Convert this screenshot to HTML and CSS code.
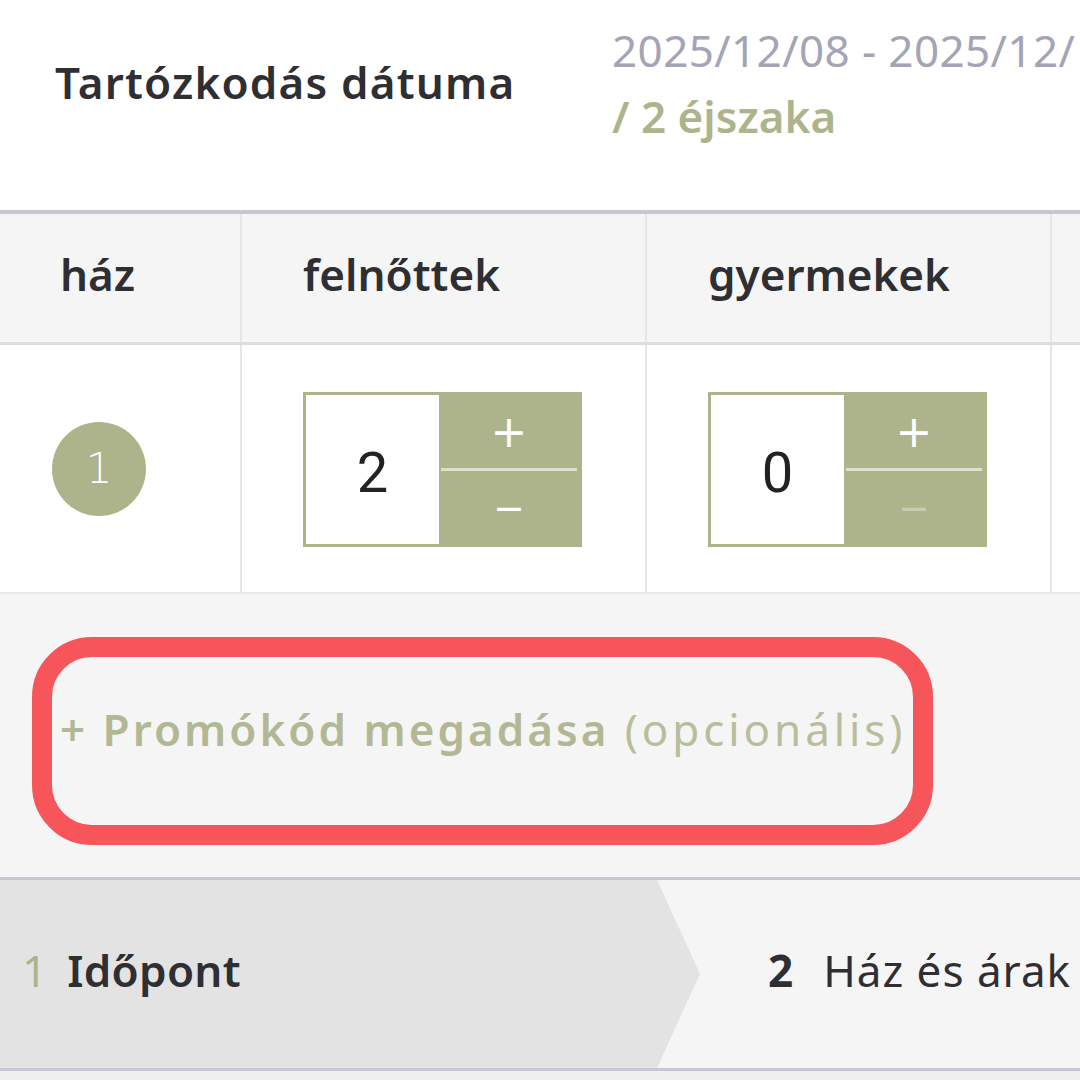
FILE: index.html
```html
<!DOCTYPE html>
<html lang="hu">
<head>
    <meta charset="UTF-8">
    <meta name="viewport" content="width=device-width, initial-scale=1.0">
    <title>Foglalás</title>
    <link rel="stylesheet" href="styles.css">
</head>
<body>

<div class="booking">
    <!-- Tartózkodás dátuma -->
    <div class="stay">
        <div class="stay-label">Tartózkodás dátuma</div>
        <div class="stay-value">
            <div class="stay-dates">2025/12/08 - 2025/12/</div>
            <div class="stay-nights">/ 2 éjszaka</div>
        </div>
    </div>

    <!-- Házak táblázat -->
    <div class="rooms">
        <div class="rooms-head">
            <div class="cell cell-first">ház</div>
            <div class="cell">felnőttek</div>
            <div class="cell">gyermekek</div>
            <div class="cell"></div>
        </div>
        <div class="rooms-row">
            <div class="cell cell-first">
                <span class="house-no">1</span>
            </div>
            <div class="cell">
                <div class="stepper">
                    <div class="stepper-value">2</div>
                    <div class="stepper-buttons">
                        <button class="stepper-btn">+</button>
                        <button class="stepper-btn">&minus;</button>
                    </div>
                </div>
            </div>
            <div class="cell">
                <div class="stepper">
                    <div class="stepper-value">0</div>
                    <div class="stepper-buttons">
                        <button class="stepper-btn">+</button>
                        <button class="stepper-btn disabled">&minus;</button>
                    </div>
                </div>
            </div>
            <div class="cell"></div>
        </div>
    </div>

    <!-- Promókód -->
    <div class="promo">
        <div class="promo-mark">
            <a class="promo-link"><strong>+ Promókód megadása</strong> (opcionális)</a>
        </div>
    </div>

    <!-- Lépések -->
    <div class="steps">
        <div class="step step-active">
            <span class="step-no">1</span>
            <span class="step-name">Időpont</span>
        </div>
        <div class="step">
            <span class="step-no">2</span>
            <span class="step-name">Ház és árak</span>
        </div>
    </div>
    <div class="steps-after"></div>
</div>

</body>
</html>
```

FILE: styles.css
```css
html, body {
    margin: 0;
    padding: 0;
    background: #ffffff;
    overflow: hidden;
}

body {
    width: 1080px;
    height: 1080px;
    font-family: "Noto Sans", "Open Sans", sans-serif;
    font-size: 44px;
    color: #2e2e33;
}

.booking {
    width: 1500px;
}

/* --- Tartózkodás dátuma --- */
.stay {
    display: flex;
    align-items: flex-start;
    height: 210px;
    padding-left: 55px;
}

.stay-label {
    width: 557px;
    padding-top: 52px;
    font-weight: 600;
    letter-spacing: 1.2px;
    white-space: nowrap;
}

.stay-value {
    padding-top: 17px;
    line-height: 66px;
    white-space: nowrap;
}

.stay-dates {
    color: #a4a4b6;
    letter-spacing: 0.4px;
}

.stay-nights {
    color: #adb48b;
    font-weight: 600;
}

/* --- Táblázat --- */
.rooms {
    border-top: 4px solid #c6c7d2;
}

.rooms-head,
.rooms-row {
    display: grid;
    grid-template-columns: 240px 405px 405px 450px;
}

.rooms-head {
    height: 128px;
    background: #f5f5f5;
    border-bottom: 3px solid #dedede;
    font-weight: 600;
}

.rooms-head .cell {
    padding-bottom: 9px;
}

.rooms-row {
    height: 247px;
    background: #ffffff;
    border-bottom: 2px solid #e8e8e8;
}

.cell {
    display: flex;
    align-items: center;
    padding-left: 61px;
    border-left: 2px solid #e6e6e6;
}

.cell-first {
    border-left: none;
    padding-left: 60px;
}

.rooms-row .cell-first {
    padding-left: 52px;
}

.house-no {
    display: flex;
    align-items: center;
    justify-content: center;
    width: 94px;
    height: 94px;
    border-radius: 50%;
    background: #adb48b;
    color: #ffffff;
    font-family: "DejaVu Sans", sans-serif;
    font-size: 42px;
    font-weight: 200;
}

.stepper {
    display: flex;
    width: 279px;
    height: 155px;
    box-sizing: border-box;
    border: 3px solid #adb48b;
    margin-top: 2px;
}

.stepper-value {
    flex: 1;
    display: flex;
    align-items: center;
    justify-content: center;
    padding-top: 6px;
    background: #ffffff;
    font-family: Roboto, sans-serif;
    font-size: 56px;
    color: #222222;
}

.stepper-buttons {
    width: 136px;
    display: flex;
    flex-direction: column;
    background: #adb48b;
    padding: 0 2px;
}

.stepper-btn {
    flex: 1;
    border: none;
    background: transparent;
    color: #ffffff;
    font-family: "DejaVu Sans", sans-serif;
    font-size: 44px;
    line-height: 1;
    padding: 0;
}

.stepper-btn + .stepper-btn {
    border-top: 3px solid #dde0cf;
    font-size: 38px;
}

.stepper-btn.disabled {
    color: #c8ccb2;
}

/* --- Promókód --- */
.promo {
    height: 283px;
    background: #f5f5f5;
    padding: 43px 0 0 32px;
    box-sizing: border-box;
}

.promo-mark {
    width: 901px;
    height: 208px;
    box-sizing: border-box;
    border: 20px solid #f65659;
    border-radius: 60px;
    padding: 0 0 24px 8px;
    display: flex;
    align-items: center;
}

.promo-link {
    color: #b8bd9b;
    letter-spacing: 3.9px;
    white-space: nowrap;
}

.promo-link strong {
    font-weight: 600;
    color: #b2b893;
    letter-spacing: 3px;
}

/* --- Lépések --- */
.steps {
    display: flex;
    height: 188px;
    background: #f5f5f5;
    border-top: 3px solid #c6c7d2;
    border-bottom: 3px solid #c6c7d2;
}

.step {
    display: flex;
    align-items: center;
    gap: 30px;
    padding-left: 68px;
    padding-bottom: 8px;
    white-space: nowrap;
}

.step-active {
    width: 700px;
    box-sizing: border-box;
    padding-left: 22px;
    gap: 20px;
    background: #e3e3e3;
    clip-path: polygon(0 0, 657px 0, 700px 50%, 657px 100%, 0 100%);
}

.step-active .step-no {
    color: #adb48b;
    font-weight: 400;
}

.step-active .step-name {
    font-weight: 600;
    letter-spacing: 0.3px;
}

.step-no {
    font-weight: 700;
}

.step-name {
    letter-spacing: 1px;
}

.steps-after {
    height: 20px;
    background: #efefef;
}
```
